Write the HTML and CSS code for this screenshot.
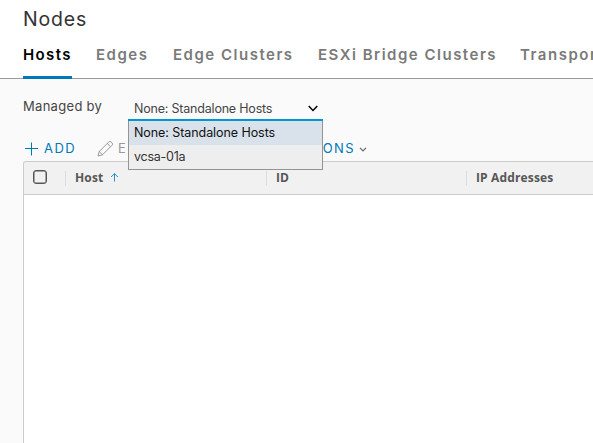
FILE: index.html
```html
<!DOCTYPE html>
<html lang="en">
<head>
<meta charset="utf-8">
<title>Nodes</title>
<link rel="stylesheet" href="styles.css">
</head>
<body>
<header class="header">
  <h1 class="title">Nodes</h1>
  <nav class="tabs">
    <a class="tab tab-hosts active">Hosts</a>
    <a class="tab tab-edges">Edges</a>
    <a class="tab tab-clusters">Edge Clusters</a>
    <a class="tab tab-bridge">ESXi Bridge Clusters</a>
    <a class="tab tab-transport">Transport Nodes</a>
  </nav>
</header>
<main class="content">
  <div class="filter">
    <label class="filter-label">Managed by</label>
    <div class="select">
      <span class="select-value">None: Standalone Hosts</span>
      <svg class="chevron" width="10" height="7" viewBox="0 0 10 7"><path d="M.7 1 5 5.4 9.3 1"/></svg>
      <ul class="menu">
        <li class="option selected">None: Standalone Hosts</li>
        <li class="option vcsa">vcsa-01a</li>
      </ul>
    </div>
  </div>
  <div class="toolbar">
    <a class="action add"><svg width="14" height="14" viewBox="0 0 14 14"><path d="M6.5 .5v13M0 6.5h13"/></svg><span>ADD</span></a>
    <a class="action edit"><svg width="17" height="17" viewBox="0 0 17 17"><path d="m1 16 1.2-4.5L11.8 1.9q1.1-1.1 2.2 0l1.1 1.1q1.1 1.1 0 2.2L5.5 14.8ZM2.2 11.5l3.3 3.3M10.3 3.5l3.3 3.3"/></svg><span>EDIT</span></a>
    <a class="action more"><span>ACTIONS</span><svg width="8" height="5" viewBox="0 0 8 5"><path d="m1 .8 3 3 3-3"/></svg></a>
  </div>
  <section class="grid">
    <div class="grid-head">
      <div class="cell check"><span class="checkbox"></span></div>
      <div class="cell host"><span>Host</span><svg width="9" height="9" viewBox="0 0 9 9"><path d="M4.5 8.5v-8M1 4 4.5.7 8 4"/></svg></div>
      <div class="cell id"><span>ID</span></div>
      <div class="cell ip"><span>IP Addresses</span></div>
    </div>
  </section>
</main>
</body>
</html>
```
FILE: styles.css
```css
* { box-sizing: border-box; }
body {
  margin: 0;
  height: 443px;
  overflow: hidden;
  display: flex;
  flex-direction: column;
  background: #fafafa;
  color: #454545;
  font: 13px/24px Inter, "Liberation Sans", sans-serif;
}
svg { display: block; flex: none; fill: none; stroke: currentColor; }
.header {
  height: 79px;
  flex: none;
  padding-left: 23px;
  background: #fff;
  border-bottom: 1px solid #9a9a9a;
  overflow-x: clip;
}
.title {
  margin: 0;
  height: 36px;
  font: 400 19.5px/38px Inter, sans-serif;
  letter-spacing: .85px;
  color: #333;
}
.tabs { display: flex; gap: 24px; height: 43px; white-space: nowrap; }
.tab {
  flex: none;
  height: 43px;
  font-weight: 600;
  font-size: 15px;
  line-height: 38px;
  letter-spacing: 1.5px;
  color: #7a7a7a;
}
.tab-hosts { width: 49px; }
.tab-edges { width: 53px; }
.tab-clusters { width: 121px; }
.tab-bridge { width: 179px; }
.tab-transport { margin-left: -1px; }
.tab.active { color: #000; letter-spacing: 1.4px; border-bottom: 3px solid #0079b8; }
.content { flex: 1; padding-left: 23px; display: flex; flex-direction: column; overflow: hidden; }
.filter { display: flex; height: 57px; padding-top: 15px; }
.filter-label { width: 105px; letter-spacing: .3px; }
.select {
  position: relative;
  width: 195px;
  height: 27px;
  padding: 2px 5px 0 6px;
  display: flex;
  justify-content: space-between;
  font-size: 12.5px;
  border-bottom: 2px solid #0095d3;
}
.select-value { padding-top: 1px; letter-spacing: -.2px; }
.chevron { margin-top: 9px; color: #000; stroke-width: 1.5; }
.menu {
  position: absolute;
  z-index: 2;
  top: 27px;
  left: 0;
  width: 195px;
  height: 49px;
  margin: 0;
  padding: 0;
  list-style: none;
  background: #eee;
  border: 1px solid #949494;
  border-top: 0;
}
.option { height: 24px; line-height: 23px; padding-left: 5px; color: #333; letter-spacing: -.07px; }
.option.selected { background: #d9e1ea; color: #111; }
.option.vcsa { letter-spacing: -.25px; }
.toolbar { display: flex; height: 25px; line-height: 23px; color: #0079b8; letter-spacing: 1.45px; }
.toolbar span { margin-top: -1px; }
.action { display: flex; align-items: center; }
.add { width: 74px; padding-left: 2px; gap: 5px; }
.edit { width: 190px; gap: 4px; color: #999; }
.more { gap: 4px; color: #0079b8; }
.more svg { color: #666; stroke-width: 1.2; margin-top: 2px; }
.grid {
  flex: 1;
  background: #fff;
  border: 1px solid #ccc;
  border-width: 1px 0 0 1px;
  border-radius: 3px 0 0;
}
.grid-head {
  height: 33px;
  display: flex;
  background: #f1f1f1;
  border-bottom: 1px solid #ccc;
  border-radius: 2px 0 0;
  color: #565656;
  font: 700 12px/31px "Open Sans", sans-serif;
  letter-spacing: .15px;
}
.cell { display: flex; align-items: center; }
.cell > span:not(.checkbox) { margin-top: -2px; }
.cell + .cell::before { content: ""; width: 1px; height: 15px; margin-right: 9px; background: #ddd; }
.check { width: 41px; padding-left: 9px; }
.checkbox { width: 14px; height: 14px; margin-top: -2px; border: 1px solid #565656; box-shadow: inset 0 0 0 .5px #565656; border-radius: 3px; }
.host { width: 201px; }
.cell.host svg { margin: -1px 0 0 7px; color: #0079b8; stroke-width: .8; }
.id { width: 200px; }
```
